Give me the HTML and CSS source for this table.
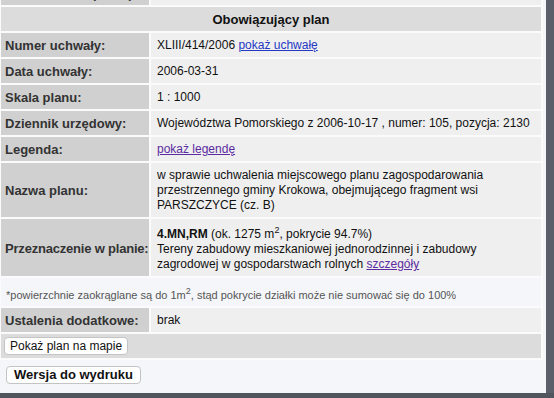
FILE: index.html
```html
<!DOCTYPE html>
<html lang="pl">
<head>
<meta charset="utf-8">
<title>Obowiązujący plan</title>
<link rel="stylesheet" href="styles.css">
</head>
<body>
<div class="window">
  <div class="panel">
    <table class="plan">
      <tr>
        <td class="label">Powierzchnia (ewid.):</td>
        <td class="value">1348 m<sup>2</sup></td>
      </tr>
      <tr>
        <th class="section" colspan="2">Obowiązujący plan</th>
      </tr>
      <tr>
        <td class="label">Numer uchwały:</td>
        <td class="value">XLIII/414/2006 <a href="#">pokaż uchwałę</a></td>
      </tr>
      <tr>
        <td class="label">Data uchwały:</td>
        <td class="value">2006-03-31</td>
      </tr>
      <tr>
        <td class="label">Skala planu:</td>
        <td class="value">1 : 1000</td>
      </tr>
      <tr>
        <td class="label">Dziennik urzędowy:</td>
        <td class="value">Województwa Pomorskiego z 2006-10-17 , numer: 105, pozycja: 2130</td>
      </tr>
      <tr>
        <td class="label">Legenda:</td>
        <td class="value"><a class="visited" href="#">pokaż legendę</a></td>
      </tr>
      <tr>
        <td class="label">Nazwa planu:</td>
        <td class="value">w sprawie uchwalenia miejscowego planu zagospodarowania przestrzennego gminy Krokowa, obejmującego fragment wsi PARSZCZYCE (cz. B)</td>
      </tr>
      <tr>
        <td class="label label-long">Przeznaczenie w planie:</td>
        <td class="value value-raised"><b>4.MN,RM</b> (ok. 1275 m<sup>2</sup>, pokrycie 94.7%)<br>Tereny zabudowy mieszkaniowej jednorodzinnej i zabudowy zagrodowej w gospodarstwach rolnych <a class="visited" href="#">szczegóły</a></td>
      </tr>
      <tr>
        <td class="note" colspan="2">*powierzchnie zaokrąglane są do 1m<sup>2</sup>, stąd pokrycie działki może nie sumować się do 100%</td>
      </tr>
      <tr>
        <td class="label">Ustalenia dodatkowe:</td>
        <td class="value">brak</td>
      </tr>
      <tr>
        <td class="actions" colspan="2"><button class="btn" type="button">Pokaż plan na mapie</button></td>
      </tr>
    </table>
    <div class="print">
      <button class="btn btn-bold" type="button">Wersja do wydruku</button>
    </div>
  </div>
  <div class="scroll-edge"></div>
  <div class="bottom-edge"></div>
</div>
</body>
</html>
```

FILE: styles.css
```css
html, body {
  margin: 0;
  padding: 0;
}

body {
  background: #575c66;
  font-family: "Liberation Sans", Arial, Helvetica, sans-serif;
  font-size: 12px;
  color: #111;
}

.window {
  display: grid;
  grid-template-columns: 546px 8px;
  grid-template-rows: 393px 5px;
  width: 554px;
  height: 398px;
  overflow: hidden;
}

.panel {
  background: #f4f6f9;
  overflow: hidden;
}

.scroll-edge {
  background: #5a5f69;
}

.bottom-edge {
  grid-column: 1 / 3;
  background: #50555e;
}

/* main data table, scrolled so the previous row is cut at the top */
.plan {
  border-collapse: separate;
  border-spacing: 2px;
  background: #fbfbfb;
  width: 544px;
  margin: -21px 0 0 -1px;
  table-layout: fixed;
}

.plan td,
.plan th {
  padding: 5px 6px 4px;
  line-height: 15px;
  vertical-align: middle;
  text-align: left;
}

.label {
  width: 142px;
  background: #d0d0d0;
  color: #333;
  font-size: 13px;
  font-weight: bold;
  padding-left: 4px !important;
  padding-right: 2px !important;
  white-space: nowrap;
  overflow: hidden;
}

.label-long {
  letter-spacing: -0.2px;
}

.value {
  background: #efefef;
  color: #111;
  font-size: 12px;
}

.value-raised {
  padding-top: 8px !important;
}

.section {
  background: #dcdcdc;
  color: #111;
  font-weight: bold;
  font-size: 13px;
  text-align: center !important;
}

.plan sup {
  font-size: 9px;
  line-height: 0;
  vertical-align: 5px;
}

.note {
  background: #f4f6f9;
  color: #555;
  font-size: 11px;
  padding: 10px 5px 3px !important;
}

.actions {
  background: #dcdcdc;
  padding: 3px 3px !important;
}

a {
  color: #2438c4;
  text-decoration: underline;
}

a.visited {
  color: #5b2ba0;
}

.btn {
  font-family: "Liberation Sans", Arial, Helvetica, sans-serif;
  font-size: 12px;
  color: #111;
  background: #fff;
  border: 1px solid #c4c4c4;
  border-radius: 4px;
  padding: 1px 5px;
  line-height: 14px;
}

.btn-bold {
  font-weight: bold;
  font-size: 13px;
  padding: 1px 7px;
  line-height: 14px;
}

.print {
  padding: 6px 0 0 6px;
}
```
